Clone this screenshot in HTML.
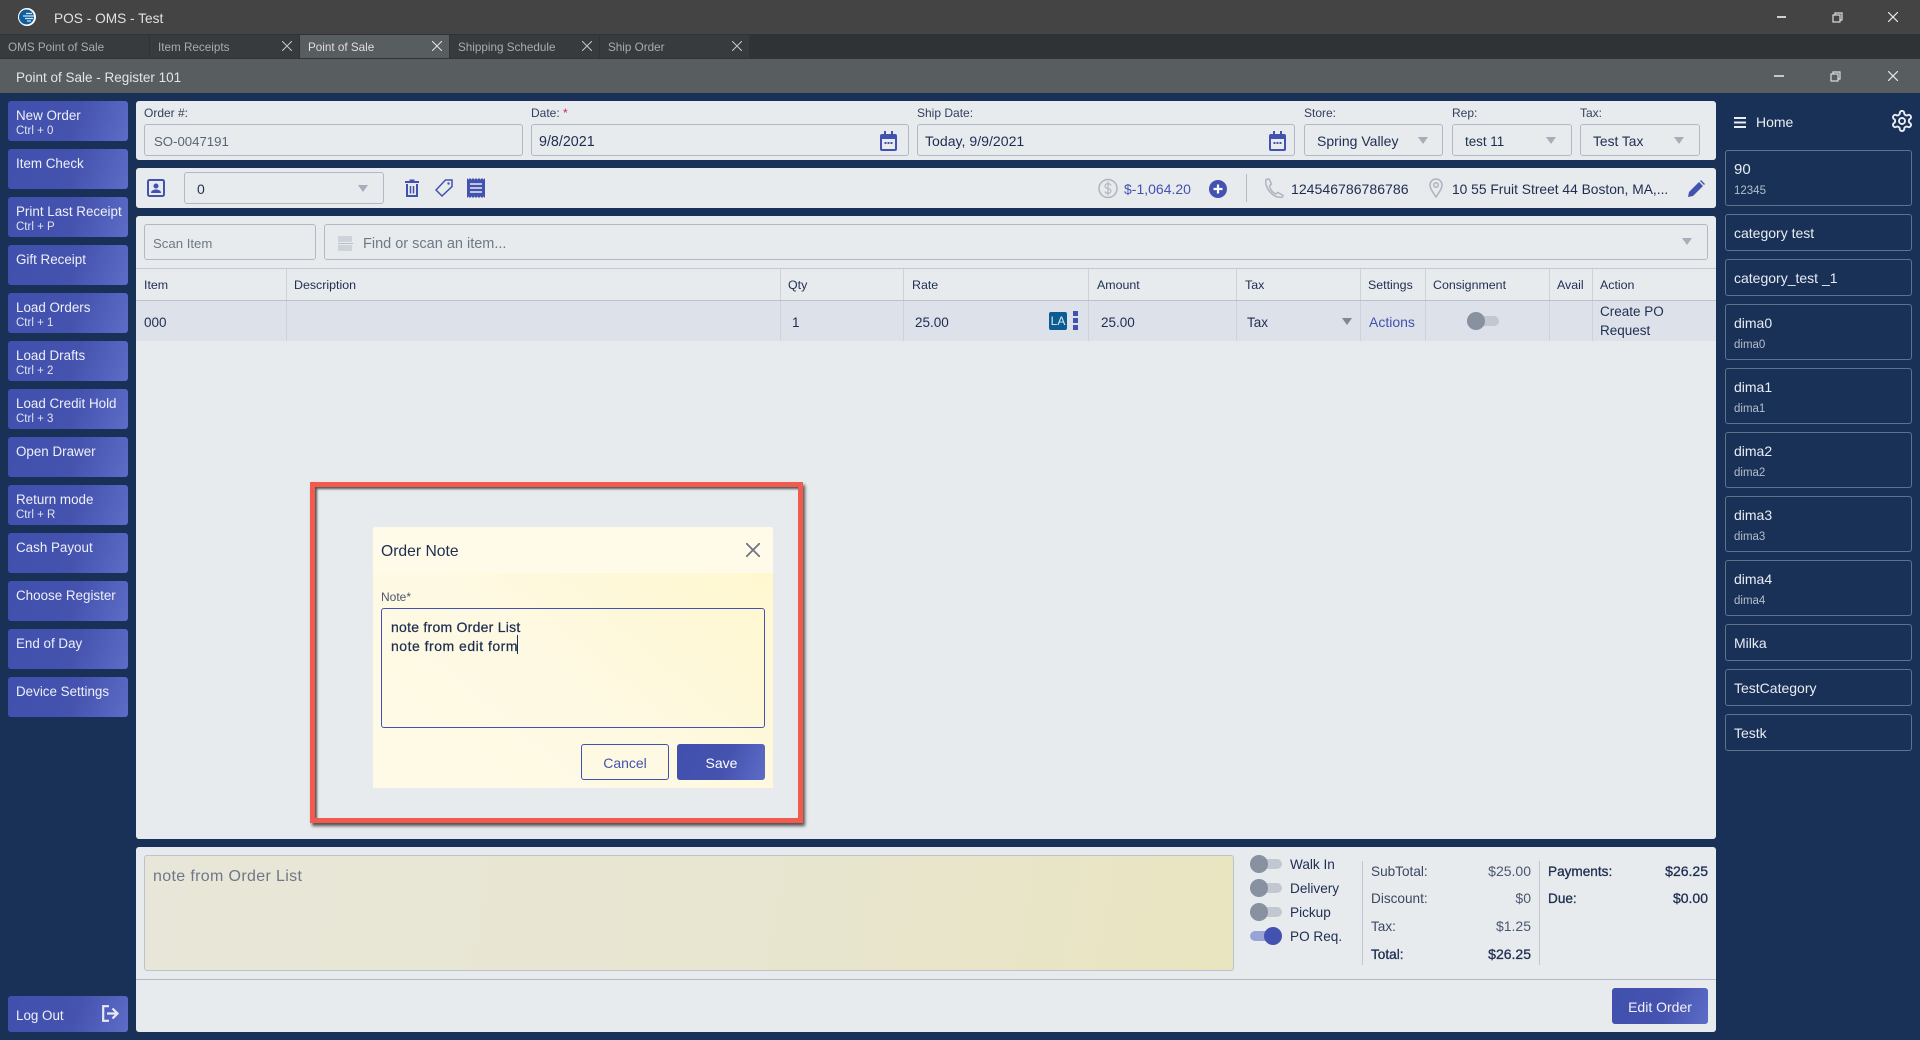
<!DOCTYPE html>
<html><head><meta charset="utf-8"><title>POS - OMS - Test</title>
<style>
html,body{margin:0;padding:0;width:1920px;height:1040px;overflow:hidden;background:#193157;font-family:"Liberation Sans",sans-serif;color:#1e2e50;font-size:14px}
div,svg{position:absolute;box-sizing:border-box}
.t{white-space:nowrap;line-height:16px}
.btn{left:8px;width:120px;height:40px;border-radius:3px;background:linear-gradient(110deg,#4050ad 0%,#4553af 55%,#5c6cc7 100%);color:#eef0f8}
.btn .a{position:absolute;left:8px;top:7px;font-size:13.400px;line-height:16px;white-space:nowrap}
.btn .b{position:absolute;left:8px;top:23px;font-size:11.500px;line-height:14px;color:#dfe3f2}
.panel{background:#e7ebee;border-radius:3px;left:136px;width:1580px}
.lbl{font-size:12px;color:#33405e}
.in{border:1px solid #b3b9c4;border-radius:3px;background:#e7ebee;height:32px}
.ar{width:0;height:0;border-left:5px solid transparent;border-right:5px solid transparent;border-top:7px solid #a7adb9}
.th{font-size:12.400px;color:#1e2e50;top:277px}
.vl{top:301px;height:40px;width:1px;background:#ced2db}
.vh{top:269px;height:31px;width:1px;background:#cdd1d8}
.card{left:1725px;width:187px;border:1px solid #5f7190;border-radius:3px;background:#193157;color:#e8ecf3}
.card .a{position:absolute;left:8px;font-size:14px;line-height:16px;white-space:nowrap}
.card .b{position:absolute;left:8px;font-size:11.500px;line-height:14px;color:#b4bdcc}
.tab{top:35px;width:149px;height:23px;background:#373b3e;font-size:11.700px;line-height:25px;padding-left:8px;color:#a9acae;white-space:nowrap}
.tt{width:32px;height:10px;border-radius:5px;background:#c2c7d0}
.kn{width:18px;height:18px;border-radius:50%;background:#87919f}
.s{font-size:13.600px}
</style></head><body>

<!-- title bar -->
<div style="left:0;top:0;width:1920px;height:34px;background:#444444"></div>
<svg style="left:18px;top:8px" width="18" height="18" viewBox="0 0 18 18"><circle cx="9" cy="9" r="9" fill="#fff"/><circle cx="8.500" cy="9" r="7.500" fill="#0f5f9e"/><path d="M8 5.500h6M5 8h11M7 10.500h8M9 13h4" stroke="#cfe4f3" stroke-width="1.300"/></svg>
<div class="t" style="left:54px;top:11px;font-size:13.700px;color:#e2e2e2">POS - OMS - Test</div>
<div style="left:1777px;top:16px;width:9px;height:2px;background:#d0d0d0"></div>
<svg style="left:1832px;top:12px" width="11" height="11" viewBox="0 0 11 11" fill="none" stroke="#ddd" stroke-width="1.200"><rect x="1" y="3" width="7" height="7"/><path d="M3 3V1h7v7H8"/></svg>
<svg style="left:1888px;top:12px" width="10" height="10" viewBox="0 0 10 10" stroke="#e6e6e6" stroke-width="1.200"><path d="M0 0l10 10M10 0L0 10"/></svg>

<!-- tabs -->
<div style="left:0;top:34px;width:1920px;height:25px;background:#2f3336"></div>
<div class="tab" style="left:0">OMS Point of Sale</div>
<div class="tab" style="left:150px">Item Receipts</div>
<div class="tab" style="left:300px;background:#585d60;color:#dedfe0">Point of Sale</div>
<div class="tab" style="left:450px">Shipping Schedule</div>
<div class="tab" style="left:600px">Ship Order</div>
<svg style="left:282px;top:41px" width="10" height="10" viewBox="0 0 10 10" stroke="#c5c7c8" stroke-width="1"><path d="M0 0l10 10M10 0L0 10"/></svg>
<svg style="left:432px;top:41px" width="10" height="10" viewBox="0 0 10 10" stroke="#e6e6e6" stroke-width="1"><path d="M0 0l10 10M10 0L0 10"/></svg>
<svg style="left:582px;top:41px" width="10" height="10" viewBox="0 0 10 10" stroke="#c5c7c8" stroke-width="1"><path d="M0 0l10 10M10 0L0 10"/></svg>
<svg style="left:732px;top:41px" width="10" height="10" viewBox="0 0 10 10" stroke="#c5c7c8" stroke-width="1"><path d="M0 0l10 10M10 0L0 10"/></svg>

<!-- sub window bar -->
<div style="left:0;top:59px;width:1920px;height:34px;background:#585d60"></div>
<div class="t" style="left:16px;top:70px;font-size:13.500px;color:#e4e5e6">Point of Sale - Register 101</div>
<div style="left:1774px;top:75px;width:10px;height:2px;background:#c5c7c9"></div>
<svg style="left:1830px;top:71px" width="11" height="11" viewBox="0 0 11 11" fill="none" stroke="#ddd" stroke-width="1.200"><rect x="1" y="3" width="7" height="7"/><path d="M3 3V1h7v7H8"/></svg>
<svg style="left:1888px;top:71px" width="10" height="10" viewBox="0 0 10 10" stroke="#e6e6e6" stroke-width="1.200"><path d="M0 0l10 10M10 0L0 10"/></svg>

<!-- left buttons -->
<div class="btn" style="top:101px"><span class="a">New Order</span><span class="b">Ctrl + 0</span></div>
<div class="btn" style="top:149px"><span class="a">Item Check</span></div>
<div class="btn" style="top:197px"><span class="a">Print Last Receipt</span><span class="b">Ctrl + P</span></div>
<div class="btn" style="top:245px"><span class="a">Gift Receipt</span></div>
<div class="btn" style="top:293px"><span class="a">Load Orders</span><span class="b">Ctrl + 1</span></div>
<div class="btn" style="top:341px"><span class="a">Load Drafts</span><span class="b">Ctrl + 2</span></div>
<div class="btn" style="top:389px"><span class="a">Load Credit Hold</span><span class="b">Ctrl + 3</span></div>
<div class="btn" style="top:437px"><span class="a">Open Drawer</span></div>
<div class="btn" style="top:485px"><span class="a">Return mode</span><span class="b">Ctrl + R</span></div>
<div class="btn" style="top:533px"><span class="a">Cash Payout</span></div>
<div class="btn" style="top:581px"><span class="a">Choose Register</span></div>
<div class="btn" style="top:629px"><span class="a">End of Day</span></div>
<div class="btn" style="top:677px"><span class="a">Device Settings</span></div>
<div class="btn" style="top:996px;height:36px"><span class="a" style="top:12px">Log Out</span>
<svg style="left:94px;top:9px" width="18" height="17" viewBox="0 0 18 17" fill="none" stroke="#e8ebf6" stroke-width="2.200"><path d="M7 1.200H1.200v14.600H7"/><path d="M5 8.500h10M10.500 3.500l5 5-5 5"/></svg></div>

<!-- panel 1 -->
<div class="panel" style="top:101px;height:59px"></div>
<div class="t lbl" style="left:144px;top:105px">Order #:</div>
<div class="t lbl" style="left:531px;top:105px">Date: <span style="color:#d01f5c">*</span></div>
<div class="t lbl" style="left:917px;top:105px">Ship Date:</div>
<div class="t lbl" style="left:1304px;top:105px">Store:</div>
<div class="t lbl" style="left:1452px;top:105px">Rep:</div>
<div class="t lbl" style="left:1580px;top:105px">Tax:</div>
<div class="in" style="left:144px;top:124px;width:379px"></div>
<div class="in" style="left:531px;top:124px;width:378px"></div>
<div class="in" style="left:917px;top:124px;width:378px"></div>
<div class="in" style="left:1304px;top:124px;width:139px"></div>
<div class="in" style="left:1452px;top:124px;width:120px"></div>
<div class="in" style="left:1580px;top:124px;width:120px"></div>
<div class="t" style="left:154px;top:134px;color:#5a6478;font-size:13.200px">SO-0047191</div>
<div class="t" style="left:539px;top:134px;font-size:14.300px">9/8/2021</div>
<div class="t" style="left:925px;top:133px;font-size:14.100px">Today, 9/9/2021</div>
<div class="t" style="left:1317px;top:133px">Spring Valley</div>
<div class="t" style="left:1465px;top:134px;font-size:13.400px">test 11</div>
<div class="t" style="left:1593px;top:134px;font-size:13.800px">Test Tax</div>
<div class="ar" style="left:1418px;top:137px"></div>
<div class="ar" style="left:1546px;top:137px"></div>
<div class="ar" style="left:1674px;top:137px"></div>
<svg style="left:880px;top:131px" width="17" height="20" viewBox="0 0 17 20"><path d="M4 0h2v3h5V0h2v3h2a2 2 0 0 1 2 2v13a2 2 0 0 1-2 2H2a2 2 0 0 1-2-2V5a2 2 0 0 1 2-2h2z" fill="#4352b0"/><rect x="2" y="8" width="13" height="10" fill="#e7ebee"/><path d="M4.500 11h2v2h-2zM7.500 11h2v2h-2zM10.500 11h2v2h-2z" fill="#4352b0"/></svg>
<svg style="left:1269px;top:131px" width="17" height="20" viewBox="0 0 17 20"><path d="M4 0h2v3h5V0h2v3h2a2 2 0 0 1 2 2v13a2 2 0 0 1-2 2H2a2 2 0 0 1-2-2V5a2 2 0 0 1 2-2h2z" fill="#4352b0"/><rect x="2" y="8" width="13" height="10" fill="#e7ebee"/><path d="M4.500 11h2v2h-2zM7.500 11h2v2h-2zM10.500 11h2v2h-2z" fill="#4352b0"/></svg>

<!-- panel 2 -->
<div class="panel" style="top:168px;height:40px"></div>
<svg style="left:147px;top:179px" width="18" height="18" viewBox="0 0 18 18"><rect x="1" y="1" width="16" height="16" rx="1.500" fill="none" stroke="#4352b0" stroke-width="2"/><circle cx="9" cy="7" r="2.500" fill="#4352b0"/><path d="M4 14c0-2.500 2.500-3.500 5-3.500s5 1 5 3.500z" fill="#4352b0"/></svg>
<div class="in" style="left:184px;top:172px;width:200px"></div>
<div class="t" style="left:197px;top:181px">0</div>
<div class="ar" style="left:358px;top:185px"></div>
<svg style="left:405px;top:179px" width="14" height="18" viewBox="0 0 14 18" fill="none" stroke="#4352b0" stroke-width="2"><path d="M0 3h14" stroke-width="2"/><path d="M4.500 1.500h5"/><path d="M2 5v12h10V5"/><path d="M5.500 7v7.500M8.500 7v7.500" stroke-width="1.500"/></svg>
<svg style="left:435px;top:179px" width="18" height="18" viewBox="0 0 18 18" fill="none" stroke="#4352b0" stroke-width="1.500"><path d="M10.500 1H17v6.500L7 17 1 11z"/><circle cx="13.500" cy="4.500" r="1.200" fill="#4352b0" stroke="none"/></svg>
<svg style="left:467px;top:178px" width="18" height="20" viewBox="0 0 18 20"><path d="M0 0l1.500 1.500L3 0l1.500 1.500L6 0l1.500 1.500L9 0l1.500 1.500L12 0l1.500 1.500L15 0l1.500 1.500L18 0v20l-1.500-1.500L15 20l-1.500-1.500L12 20l-1.500-1.500L9 20l-1.500-1.500L6 20l-1.500-1.500L3 20l-1.500-1.500L0 20z" fill="#4352b0"/><path d="M3 6h12M3 10h12M3 14h12" stroke="#e7ebee" stroke-width="1.600"/></svg>
<svg style="left:1098px;top:178px" width="20" height="21" viewBox="0 0 20 21" fill="none" stroke="#aeb4bd" stroke-width="1.500"><circle cx="10" cy="10.500" r="9"/><path d="M13 7.500c-.5-1.200-1.700-1.800-3-1.800-1.800 0-3 1-3 2.400s1.200 2 3 2.400 3 1 3 2.400-1.200 2.400-3 2.400c-1.400 0-2.600-.7-3-1.900M10 3.500v14" stroke-width="1.100"/></svg>
<div class="t" style="left:1124px;top:181px;color:#4352b0;font-size:14px">$-1,064.20</div>
<svg style="left:1209px;top:180px" width="18" height="18" viewBox="0 0 18 18"><circle cx="9" cy="9" r="9" fill="#4352b0"/><path d="M9 4.500v9M4.500 9h9" stroke="#fff" stroke-width="2.200"/></svg>
<div style="left:1246px;top:174px;width:1px;height:28px;background:#b6bbc4"></div>
<svg style="left:1265px;top:178px" width="19" height="20" viewBox="0 0 19 20" fill="none" stroke="#aeb4bd" stroke-width="1.500"><path d="M1 1.500L4 1l2.500 5L4.500 8c.8 3.500 3 6.500 6 8l2.500-1.500 5 3-.5 1.500c-1 .5-3 .5-5 0C7 17.500 2.500 12 1 6.500c-.4-1.700-.3-3.500 0-5z"/></svg>
<div class="t" style="left:1291px;top:181px;font-size:14.100px">124546786786786</div>
<svg style="left:1429px;top:178px" width="14" height="20" viewBox="0 0 14 20" fill="none" stroke="#aeb4bd" stroke-width="1.500"><path d="M7 19C3 13 1 10 1 7a6 6 0 0 1 12 0c0 3-2 6-6 12z"/><circle cx="7" cy="7" r="2.200"/></svg>
<div class="t" style="left:1452px;top:182px;font-size:13.800px">10 55 Fruit Street 44 Boston, MA,...</div>
<svg style="left:1688px;top:180px" width="17" height="17" viewBox="0 0 17 17"><path d="M0 17l1-5L11 2l4 4L5 16zM12 1l1-1 4 4-1 1z" fill="#4352b0"/></svg>

<!-- panel 3 -->
<div class="panel" style="top:216px;height:623px"></div>
<div class="in" style="left:144px;top:224px;width:172px;height:36px"></div>
<div class="t" style="left:153px;top:236px;color:#6f7887;font-size:13.200px">Scan Item</div>
<div class="in" style="left:324px;top:224px;width:1384px;height:36px"></div>
<svg style="left:338px;top:236px" width="15" height="15" viewBox="0 0 15 15" stroke="#a9b0bb" stroke-width=".8"><path d="M1 0v6M3 0v6M5 0v6M7 0v6M9 0v6M11 0v6M13 0v6M0 7.500h15M1 9v6M3 9v6M5 9v6M7 9v6M9 9v6M11 9v6M13 9v6"/></svg>
<div class="t" style="left:363px;top:236px;color:#6f7887;font-size:14.500px">Find or scan an item...</div>
<div class="ar" style="left:1682px;top:238px"></div>

<!-- table -->
<div style="left:136px;top:268px;width:1580px;height:1px;background:#c5c9d1"></div>
<div style="left:136px;top:300px;width:1580px;height:1px;background:#bcc1cb"></div>
<div style="left:136px;top:301px;width:1580px;height:40px;background:#dde1ea"></div>
<div class="vh" style="left:286px"></div><div class="vl" style="left:286px"></div>
<div class="vh" style="left:780px"></div><div class="vl" style="left:780px"></div>
<div class="vh" style="left:903px"></div><div class="vl" style="left:903px"></div>
<div class="vh" style="left:1088px"></div><div class="vl" style="left:1088px"></div>
<div class="vh" style="left:1236px"></div><div class="vl" style="left:1236px"></div>
<div class="vh" style="left:1360px"></div><div class="vl" style="left:1360px"></div>
<div class="vh" style="left:1425px"></div><div class="vl" style="left:1425px"></div>
<div class="vh" style="left:1549px"></div><div class="vl" style="left:1549px"></div>
<div class="vh" style="left:1592px"></div><div class="vl" style="left:1592px"></div>
<div class="t th" style="left:144px">Item</div>
<div class="t th" style="left:294px">Description</div>
<div class="t th" style="left:788px">Qty</div>
<div class="t th" style="left:912px">Rate</div>
<div class="t th" style="left:1097px">Amount</div>
<div class="t th" style="left:1245px">Tax</div>
<div class="t th" style="left:1368px">Settings</div>
<div class="t th" style="left:1433px">Consignment</div>
<div class="t th" style="left:1557px">Avail</div>
<div class="t th" style="left:1600px">Action</div>
<div class="t" style="left:144px;top:315px;font-size:13.500px">000</div>
<div class="t" style="left:792px;top:315px;font-size:13.500px">1</div>
<div class="t" style="left:915px;top:315px;font-size:13.500px">25.00</div>
<div class="t" style="left:1049px;top:312px;width:18px;height:18px;background:#0b5c93;border-radius:2px;color:#dfe8f0;font-size:12px;line-height:18px;text-align:center">LA</div>
<div style="left:1073px;top:311px;width:5px;height:5px;background:#4352b0"></div>
<div style="left:1073px;top:318px;width:5px;height:5px;background:#4352b0"></div>
<div style="left:1073px;top:325px;width:5px;height:5px;background:#4352b0"></div>
<div class="t" style="left:1101px;top:315px;font-size:13.500px">25.00</div>
<div class="t" style="left:1247px;top:315px;font-size:13.500px">Tax</div>
<div class="ar" style="left:1342px;top:318px;border-top-color:#7f8794"></div>
<div class="t" style="left:1369px;top:314px;color:#4352b0;font-size:14px">Actions</div>
<div class="tt" style="left:1467px;top:316px"></div><div class="kn" style="left:1467px;top:312px"></div>
<div class="t" style="left:1600px;top:304px;font-size:13.500px">Create PO</div>
<div class="t" style="left:1600px;top:323px;font-size:13.500px">Request</div>

<!-- modal highlight -->
<div style="left:310px;top:482px;width:493px;height:341px;border:5px solid #f25a4e;box-shadow:2px 3px 3px rgba(0,0,0,.65),inset 2px 2px 2px rgba(0,0,0,.65)"></div>
<div style="left:373px;top:527px;width:400px;height:261px;border-radius:3px 3px 0 0;background:linear-gradient(40deg,#fefae7 0%,#fef9e2 45%,#fff7cc 100%)"></div>
<div style="left:373px;top:527px;width:400px;height:46px;border-radius:3px 3px 0 0;background:#fffbe8"></div>
<div class="t" style="left:381px;top:544px;font-size:15.700px">Order Note</div>
<svg style="left:746px;top:543px" width="14" height="14" viewBox="0 0 14 14" stroke="#6c7686" stroke-width="1.800"><path d="M0 0l14 14M14 0L0 14"/></svg>
<div class="t" style="left:381px;top:589px;font-size:12px;color:#4c5870">Note*</div>
<div style="left:381px;top:608px;width:384px;height:120px;border:1px solid #4352b0;border-radius:3px"></div>
<div class="t" style="left:391px;top:619px;font-size:14px;letter-spacing:.25px;-webkit-text-stroke:.25px #1e2e50">note from Order List</div>
<div class="t" style="left:391px;top:638px;font-size:14px;letter-spacing:.5px;-webkit-text-stroke:.25px #1e2e50">note from edit form</div>
<div style="left:517px;top:635px;width:1px;height:19px;background:#1e2e50"></div>
<div style="left:581px;top:744px;width:88px;height:36px;border:1px solid #4352b0;border-radius:3px;color:#4352b0;text-align:center;line-height:36px;font-size:14px">Cancel</div>
<div style="left:677px;top:744px;width:88px;height:36px;border-radius:3px;background:linear-gradient(110deg,#4050ad 0%,#4553af 55%,#5c6cc7 100%);color:#fff;text-align:center;line-height:38px;font-size:14px;padding-left:1px">Save</div>

<!-- bottom panel -->
<div class="panel" style="top:847px;height:185px"></div>
<div style="left:144px;top:855px;width:1090px;height:116px;border:1px solid #bcc3cc;border-radius:3px;background:linear-gradient(100deg,#e8e6d8 0%,#e8e5cf 60%,#e9e5c0 100%)"></div>
<div class="t" style="left:153px;top:869px;font-size:16px;letter-spacing:.35px;color:#6d7888">note from Order List</div>
<div class="tt" style="left:1250px;top:859px"></div><div class="kn" style="left:1250px;top:855px"></div>
<div class="tt" style="left:1250px;top:883px"></div><div class="kn" style="left:1250px;top:879px"></div>
<div class="tt" style="left:1250px;top:907px"></div><div class="kn" style="left:1250px;top:903px"></div>
<div class="tt" style="left:1250px;top:931px;background:#9aa3d6"></div><div class="kn" style="left:1264px;top:927px;background:#4352b0"></div>
<div class="t s" style="left:1290px;top:857px">Walk In</div>
<div class="t s" style="left:1290px;top:881px">Delivery</div>
<div class="t s" style="left:1290px;top:905px">Pickup</div>
<div class="t s" style="left:1290px;top:929px">PO Req.</div>
<div style="left:1362px;top:861px;width:1px;height:104px;background:#c2c6ce"></div>
<div style="left:1539px;top:861px;width:1px;height:104px;background:#c2c6ce"></div>
<div class="t s" style="left:1371px;top:864px;color:#3c4860">SubTotal:</div>
<div class="t s" style="left:1371px;top:891px;color:#3c4860">Discount:</div>
<div class="t s" style="left:1371px;top:919px;color:#3c4860">Tax:</div>
<div class="t s" style="left:1371px;top:947px;-webkit-text-stroke:.3px #1e2e50">Total:</div>
<div class="t" style="right:389px;top:863px;color:#4c5870">$25.00</div>
<div class="t" style="right:389px;top:890px;color:#4c5870">$0</div>
<div class="t" style="right:389px;top:918px;color:#4c5870">$1.25</div>
<div class="t" style="right:389px;top:946px;-webkit-text-stroke:.3px #1e2e50">$26.25</div>
<div class="t s" style="left:1548px;top:864px;-webkit-text-stroke:.3px #1e2e50">Payments:</div>
<div class="t s" style="left:1548px;top:891px;-webkit-text-stroke:.3px #1e2e50">Due:</div>
<div class="t" style="right:212px;top:863px;-webkit-text-stroke:.3px #1e2e50">$26.25</div>
<div class="t" style="right:212px;top:890px;-webkit-text-stroke:.3px #1e2e50">$0.00</div>
<div style="left:136px;top:979px;width:1580px;height:1px;background:#b3b8c2"></div>
<div style="left:1612px;top:988px;width:96px;height:36px;border-radius:3px;background:linear-gradient(110deg,#4050ad 0%,#4553af 55%,#5c6cc7 100%);color:#f0f2fa;text-align:center;line-height:38px;font-size:14px">Edit Order</div>

<!-- right column -->
<svg style="left:1734px;top:117px" width="12" height="11" viewBox="0 0 12 11" stroke="#e8ecf3" stroke-width="2"><path d="M0 1h12M0 5.500h12M0 10h12"/></svg>
<div class="t" style="left:1756px;top:114px;color:#e8ecf3;font-size:14px">Home</div>
<svg style="left:1890px;top:109px" width="24" height="24" viewBox="0 0 24 24" fill="none" stroke="#e8ecf3" stroke-width="1.900"><path d="M12.220 2h-.44a2 2 0 0 0-2 2v.18a2 2 0 0 1-1 1.730l-.43.250a2 2 0 0 1-2 0l-.15-.080a2 2 0 0 0-2.730.730l-.22.380a2 2 0 0 0 .73 2.730l.15.100a2 2 0 0 1 1 1.720v.510a2 2 0 0 1-1 1.740l-.15.090a2 2 0 0 0-.73 2.730l.22.380a2 2 0 0 0 2.730.730l.15-.080a2 2 0 0 1 2 0l.43.250a2 2 0 0 1 1 1.730V20a2 2 0 0 0 2 2h.44a2 2 0 0 0 2-2v-.18a2 2 0 0 1 1-1.730l.43-.250a2 2 0 0 1 2 0l.15.080a2 2 0 0 0 2.730-.730l.22-.390a2 2 0 0 0-.73-2.730l-.15-.080a2 2 0 0 1-1-1.740v-.5a2 2 0 0 1 1-1.740l.15-.090a2 2 0 0 0 .73-2.730l-.22-.380a2 2 0 0 0-2.730-.730l-.15.080a2 2 0 0 1-2 0l-.43-.250a2 2 0 0 1-1-1.730V4a2 2 0 0 0-2-2z"/><circle cx="12" cy="12" r="3"/></svg>
<div class="card" style="top:150px;height:56px"><span class="a" style="top:11px;font-size:15px">90</span><span class="b" style="top:33px">12345</span></div>
<div class="card" style="top:214px;height:37px"><span class="a" style="top:10px">category test</span></div>
<div class="card" style="top:259px;height:37px"><span class="a" style="top:10px">category_test _1</span></div>
<div class="card" style="top:304px;height:56px"><span class="a" style="top:10px">dima0</span><span class="b" style="top:33px">dima0</span></div>
<div class="card" style="top:368px;height:56px"><span class="a" style="top:10px">dima1</span><span class="b" style="top:33px">dima1</span></div>
<div class="card" style="top:432px;height:56px"><span class="a" style="top:10px">dima2</span><span class="b" style="top:33px">dima2</span></div>
<div class="card" style="top:496px;height:56px"><span class="a" style="top:10px">dima3</span><span class="b" style="top:33px">dima3</span></div>
<div class="card" style="top:560px;height:56px"><span class="a" style="top:10px">dima4</span><span class="b" style="top:33px">dima4</span></div>
<div class="card" style="top:624px;height:37px"><span class="a" style="top:10px">Milka</span></div>
<div class="card" style="top:669px;height:37px"><span class="a" style="top:10px">TestCategory</span></div>
<div class="card" style="top:714px;height:37px"><span class="a" style="top:10px">Testk</span></div>
</body></html>
